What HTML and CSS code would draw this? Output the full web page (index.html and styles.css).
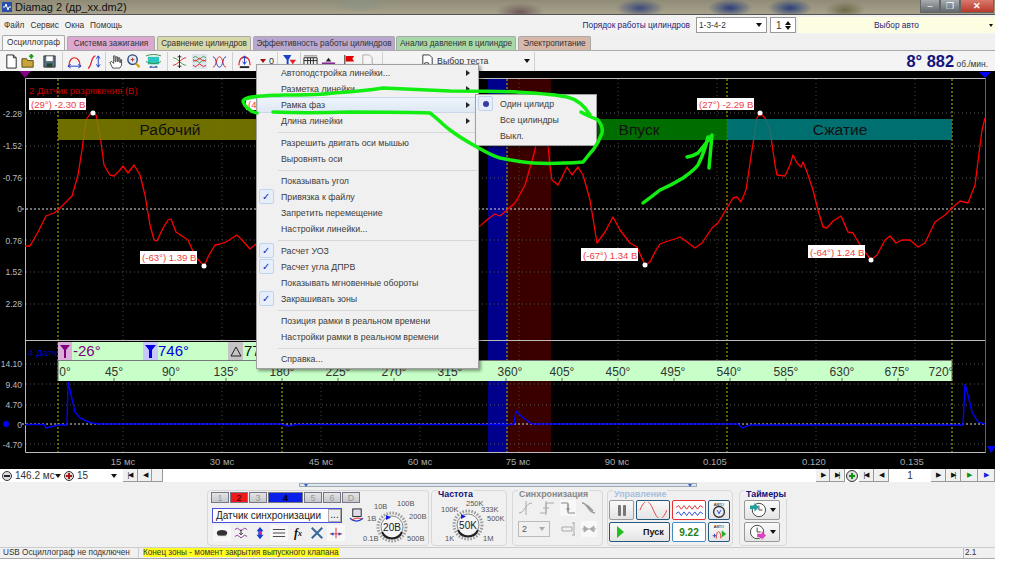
FILE: index.html
```html
<!DOCTYPE html>
<html lang="ru">
<head>
  <meta charset="UTF-8" />
  <title>Diamag 2</title>
  <link rel="stylesheet" href="styles.css">
</head>
<body>

<div class="window">

  <!-- Title bar -->
  <div class="titlebar">
    <svg class="app-icon" viewBox="0 0 10 10"><rect width="10" height="10" fill="#2a4fa8"/><path d="M1 5h2l1-3 2 6 1-3h2" fill="none" stroke="#fff"/></svg>
    <span class="title-text">Diamag 2 (др_хх.dm2)</span>
    <div class="win-buttons">
      <span class="win-btn">&#8211;</span>
      <span class="win-btn">&#10064;</span>
      <span class="win-btn close">&#10005;</span>
    </div>
  </div>

  <!-- Menu bar -->
  <div class="menubar">
    <span>Файл</span><span>Сервис</span><span>Окна</span><span>Помощь</span>
    <span class="order-label">Порядок работы цилиндров</span>
    <div class="select order-select">1-3-4-2<i class="drop"></i></div>
    <div class="select spin">1<b class="spin-arrows"><i class="up"></i><i class="drop"></i></b></div>
    <div class="car-select">Выбор авто<i class="drop"></i></div>
  </div>

  <!-- Tabs -->
  <div class="tabs">
    <div class="tab active">Осциллограф</div>
    <div class="tab pink">Система зажигания</div>
    <div class="tab olive">Сравнение цилиндров</div>
    <div class="tab violet">Эффективность работы цилиндров</div>
    <div class="tab green">Анализ давления в цилиндре</div>
    <div class="tab brown">Электропитание</div>
  </div>

  <!-- Toolbar -->
  <div class="toolbar">
    <svg class="ti" viewBox="0 0 16 16"><path d="M3 1h7l3 3v11H3z" fill="#fff" stroke="#222"/><path d="M10 1v3h3" fill="none" stroke="#222"/></svg>
    <svg class="ti ml2" viewBox="0 0 16 16"><path d="M1 5h5l1 2h6v7H1z" fill="#c9a53c" stroke="#5d4a12"/><path d="M11 1v4M9 3l2-2 2 2" stroke="#1c9c1c" stroke-width="2" fill="none"/></svg>
    <svg class="ti ml6" viewBox="0 0 16 16"><path d="M2 2h12v12H2z" fill="#5a7184" stroke="#333"/><rect x="4.500" y="2.500" width="7" height="5" fill="#fff"/><rect x="5" y="10" width="6" height="4" fill="#243"/></svg>
    <i class="tsep ml5"></i>
    <svg class="ti ml4" viewBox="0 0 16 16"><path d="M2 13C2 1 14 1 14 13" fill="none" stroke="#e02020" stroke-width="1.300"/><path d="M1 13h14M1 13l3-2M1 13l3 2M15 13l-3-2M15 13l-3 2" stroke="#1a3fd0" fill="none"/></svg>
    <svg class="ti ml5" viewBox="0 0 16 16"><path d="M1 15C5 15 4 2 9 2" fill="none" stroke="#e02020" stroke-width="1.300"/><path d="M12 2v12M12 2l-2 3M12 2l2 3M12 14l-2-3M12 14l2-3" stroke="#1a3fd0" fill="none"/></svg>
    <i class="tsep ml3"></i>
    <svg class="ti ml2" viewBox="0 0 16 16"><path d="M5 15L2 9l2-1 2 2V2h1.500v6h1V3h1.500v5h1V4h1.500v5h1V6h1v6l-2 3z" fill="#fff" stroke="#222" stroke-width=".8"/></svg>
    <svg class="ti ml3" viewBox="0 0 16 16"><circle cx="7" cy="6" r="5" fill="#dfeefa" stroke="#24406c" stroke-width="1.400"/><path d="M5 6h4M7 4v4" stroke="#b03030"/><path d="M10.500 10l4 4" stroke="#d9a520" stroke-width="2.400"/></svg>
    <svg class="ti ml5" viewBox="0 0 16 16"><rect x="2" y="3" width="12" height="8" fill="#28c8c0"/><path d="M0 2c5-2 11-2 16 0M0 8c5 3 11 3 16 0" fill="none" stroke="#3a8a40"/><path d="M4 14h8M4 14l2-1M12 14l-2-1" stroke="#123a9a" fill="none"/></svg>
    <i class="tsep ml6"></i>
    <svg class="ti ml4" viewBox="0 0 16 16"><path d="M1 4c5 0 9 8 14 8" fill="none" stroke="#3a9a40"/><path d="M1 12c5 0 9-8 14-8" fill="none" stroke="#e02020"/><path d="M8 1v14M6 3h4M6 13h4" stroke="#222"/></svg>
    <svg class="ti ml5 selected" viewBox="0 0 16 16"><path d="M1 4q3-3 5 0t4 0 5 0M1 8q3-3 5 0t4 0 5 0" fill="none" stroke="#3a9a40"/><path d="M1 6q3 3 5 0t4 0 5 0M1 12q3 3 5 0t4 0 5 0" fill="none" stroke="#e02020"/></svg>
    <svg class="ti ml5" viewBox="0 0 16 16"><path d="M1 3c4 0 3 11 7 11s3-11 7-11" fill="none" stroke="#1a3fd0"/><path d="M1 14c4 0 3-11 7-11s3 11 7 11" fill="none" stroke="#e02020"/></svg>
    <i class="tsep ml5"></i>
    <svg class="ti ml4" viewBox="0 0 16 16"><path d="M2 12C2 0 14 0 14 12" fill="none" stroke="#e02020" stroke-width="1.300"/><path d="M8 2v9M8 2L6 5M8 2l2 3M8 11L6 8M8 11l2-3" stroke="#1a3fd0" fill="none"/><path d="M3 14h10" stroke="#222" stroke-width="2"/></svg>
    <span class="t-count ml8"><i class="drop red"></i>0</span>
    <i class="tsep ml3"></i>
    <svg class="ti ml4" viewBox="0 0 16 16"><path d="M1 1h9L7 6v7H5V6z" fill="#1a3fd0"/><path d="M8 6h7l-3 4v4h-1v-4z" fill="#e02020"/></svg>
    <i class="tsep ml3"></i>
    <svg class="ti ml2" viewBox="0 0 16 16"><path d="M1 4h14v8H1zM1 7h14M5 4v8M8 4v8M11 4v8" fill="none" stroke="#222"/><path d="M1 2h14" stroke="#7a7a7a"/></svg>
    <svg class="ti ml3" viewBox="0 0 16 16"><path d="M1 10h14" stroke="#8a2a9a" stroke-width="2"/><path d="M1 14h14" stroke="#8a2a9a"/><path d="M8 4l-3 4h6z" fill="#222"/></svg>
    <svg class="ti ml6" viewBox="0 0 16 16"><path d="M3 1v14" stroke="#222"/><path d="M4 2h9l-2 3 2 3H4z" fill="#e00000"/></svg>
    <svg class="ti ml3" viewBox="0 0 16 16"><path d="M3 1h7l3 3v11H3z" fill="#f6f6f6" stroke="#aaa"/></svg>
    <i class="tsep ml7"></i>
    <div class="test-select">
      <svg class="ti" viewBox="0 0 16 16"><path d="M3 1h7l3 3v11H3z" fill="#fff" stroke="#333"/><circle cx="7" cy="12" r="3" fill="#ddd" stroke="#333"/></svg>
      <span>Выбор теста</span>
      <i class="drop"></i>
    </div>
    <i class="tsep"></i>
    <div class="rpm"><b>8° 882</b> <span>об./мин.</span></div>
  </div>

  <!-- Oscilloscope view -->
  <div class="scope">
    <svg class="scope-svg" viewBox="0 71 995 398" width="995" height="398">
      <!-- zones -->
      <rect class="zone-blue" x="488" y="79" width="19" height="373"/>
      <rect class="zone-red" x="507" y="79" width="44" height="373"/>

      <!-- grid -->
      <path class="grid-dim" d="M123 79V452M222 79V452M321 79V452M420 79V452M519 79V452M618 79V452M717 79V452M816 79V452M915 79V452"/>
      <path class="grid-h" d="M22 113H985M22 146H985M22 178H985M22 240H985M22 272H985M22 304H985M22 364H985M22 384H985M22 405H985M22 444H985"/>
      <path class="grid-zero" d="M22 209H985M22 424H985"/>
      <path class="grid-yellow" d="M58 79V452M282 79V452M507 79V452M727 79V452M952 79V452"/>

      <!-- axes -->
      <path class="axis" d="M25.500 78.500H985.500V452.500H25.500ZM25 340.500H985"/>
      <path class="axis-blue" d="M985.500 78V452"/>
      <path class="marker-purple" d="M19 71H31L25 78Z"/>
      <path class="marker-blue" d="M979 72H991L985 78Z"/>
      <path class="marker-blue" d="M987 446H996L991 453Z"/>
      <circle cx="6" cy="424" r="3" class="dot-blue"/>

      <!-- upper trace -->
      <path class="trace-red" d="M25 246L30 246 38 232 46 216 54 213 58 210 65 203 70 198 72 196 78 175 82 150 86 120 90 114 93 113 96 115 100 135 104 165 110 175 114 176 120 170 123 166 128 173 134 165 140 175 145 195 150 225 154 240 157 241 163 228 168 220 171 219 176 232 182 236 188 240 195 256 204 266 209 255 215 245 220 244 226 242 237 235 243 241 250 249 256 244 270 240 282 209 300 190 330 230 350 210 380 240 420 260 450 240 480 226 488 219 495 214 500 216 507 210 515 203 525 185 535 150 540 120 545 110 548 145 550 166 552 180 558 185 567 167 572 175 578 167 583 175 590 200 597 243 605 232 613 217 620 230 630 243 637 247 645 265 650 262 655 252 660 244 668 241 675 239 680 237 687 242 695 248 702 243 712 228 718 223 727 208 733 198 737 197 741 202 746 190 752 150 757 118 760 113 765 118 770 130 775 165 777 175 785 176 790 165 793 155 797 163 801 167 803 162 807 172 813 190 818 210 823 227 827 228 833 221 841 216 848 232 853 233 860 245 871 260 877 255 885 240 890 236 896 243 902 240 910 240 918 247 925 243 935 222 945 215 952 208 960 201 968 203 975 185 982 130 985 118"/>

      <!-- phase bands -->
      <rect class="band-olive" x="58" y="119" width="224" height="21"/>
      <rect class="band-green" x="551" y="119" width="176" height="21"/>
      <rect class="band-teal" x="727" y="119" width="225" height="21"/>
      <text class="band-text" x="170" y="135">Рабочий</text>
      <text class="band-text" x="639" y="135">Впуск</text>
      <text class="band-text" x="840" y="135">Сжатие</text>

      <!-- picked points -->
      <circle class="pick" cx="93" cy="113" r="2.500"/>
      <circle class="pick" cx="204" cy="266" r="2.500"/>
      <circle class="pick" cx="645" cy="265" r="2.500"/>
      <circle class="pick" cx="760" cy="113" r="2.500"/>
      <circle class="pick" cx="871" cy="260" r="2.500"/>

      <text class="legend-red" x="29" y="94">2 Датчик разряжения (В)</text>
      <rect class="tag" x="29" y="98" width="57" height="12"/><text class="tag-text" x="31" y="108">(29°) -2.30 В</text>
      <rect class="tag" x="246" y="97" width="14" height="13"/><text class="tag-text" x="248" y="108">(4</text>
      <rect class="tag" x="697" y="98" width="57" height="12"/><text class="tag-text" x="699" y="108">(27°) -2.29 В</text>
      <rect class="tag" x="140" y="251" width="57" height="13"/><text class="tag-text" x="142" y="261">(-63°) 1.39 В</text>
      <rect class="tag" x="581" y="248" width="57" height="13"/><text class="tag-text" x="583" y="259">(-67°) 1.34 В</text>
      <rect class="tag" x="808" y="245" width="57" height="13"/><text class="tag-text" x="810" y="256">(-64°) 1.24 В</text>

      <!-- y labels -->
      <g class="y-labels">
        <text x="22" y="117">-2.28</text><text x="22" y="149">-1.52</text><text x="22" y="181">-0.76</text>
        <text x="22" y="212">0</text><text x="22" y="244">0.76</text><text x="22" y="275">1.52</text><text x="22" y="307">2.28</text>
        <text x="22" y="367">14.10</text><text x="22" y="388">9.40</text><text x="22" y="408">4.70</text>
        <text x="22" y="428">0</text><text x="22" y="448">-4.70</text>
      </g>

      <!-- lower panel: marker row and degree ruler -->
      <text class="legend-blue" x="28" y="356">4 Датчик</text>
      <rect class="ruler" x="58" y="342" width="420" height="18"/>
      <rect class="ruler-line" x="58" y="360" width="894" height="1"/>
      <rect class="ruler" x="58" y="361" width="894" height="20"/>
      <rect x="58" y="342" width="14" height="18" fill="#d9aed9"/>
      <path d="M60 345H70L66 350V358H64V350Z" fill="#800080"/>
      <text class="m-text purple" x="73" y="356">-26°</text>
      <rect x="143" y="342" width="15" height="18" fill="#c8c8ff"/>
      <path d="M145 345H156L152 350V358H149V350Z" fill="#0000e0"/>
      <text class="m-text blue" x="158" y="356">746°</text>
      <rect x="228" y="342" width="15" height="18" fill="#c4c4c4"/>
      <path d="M236 347L231 356H241Z" fill="none" stroke="#222"/>
      <text class="m-text" x="244" y="356">77</text>
      <path class="ruler-ticks" d="M114 378V381M170 378V381M226 378V381M282 378V381M338 378V381M394 378V381M450 378V381M506 378V381M562 378V381M618 378V381M674 378V381M730 378V381M786 378V381M842 378V381M898 378V381M58 361V381M952 361V381"/>
      <g class="ruler-labels">
        <text x="65" y="376">0°</text><text x="114" y="376">45°</text><text x="171" y="376">90°</text><text x="226" y="376">135°</text>
        <text x="282" y="376">180°</text><text x="338" y="376">225°</text><text x="394" y="376">270°</text><text x="450" y="376">315°</text>
        <text x="510" y="376">360°</text><text x="562" y="376">405°</text><text x="618" y="376">450°</text><text x="673" y="376">495°</text>
        <text x="729" y="376">540°</text><text x="786" y="376">585°</text><text x="842" y="376">630°</text><text x="897" y="376">675°</text>
        <text x="941" y="376">720°</text>
      </g>

      <!-- lower trace -->
      <path class="trace-blue" d="M25 424.500H44L46 428 50 427 58 425H67L68 382 70 390 75 412 80 418 86 421 92 423 100 424H280L288 426 296 424.500H510L514 424 516 411 520 415 526 420 532 424H738L742 428 750 425H956L963 425 965 384 968 395 972 412 978 422 985 424"/>

      <!-- time labels -->
      <g class="x-labels">
        <text x="123" y="465">15 мс</text><text x="222" y="465">30 мс</text><text x="321" y="465">45 мс</text><text x="420" y="465">60 мс</text>
        <text x="518" y="465">75 мс</text><text x="617" y="465">90 мс</text><text x="715" y="465">0.105</text><text x="814" y="465">0.120</text><text x="912" y="465">0.135</text>
      </g>
    </svg>
  </div>

  <!-- Navigation row -->
  <div class="navbar">
    <span class="round minus"></span>
    <span class="nav-field first">146.2 мс<i class="drop"></i></span>
    <span class="round plus"></span>
    <span class="nav-field second">15<i class="drop"></i></span>
    <span class="nav-btn">|&#9664;</span><span class="nav-btn small">&#9664;</span><span class="nav-btn tiny"></span>
    <div class="nav-right">
      <span class="nav-btn small">&#9654;</span><span class="nav-btn">&#9654;|</span>
      <span class="round plus-green"></span>
      <span class="nav-btn">|&#9664;</span><span class="nav-btn">&#9664;</span>
      <span class="nav-num">1</span>
      <span class="nav-btn">&#9654;</span><span class="nav-btn">&#9654;|</span>
      <span class="nav-btn play-green">&#9654;</span><span class="nav-btn play-blue">&#9654;</span>
    </div>
  </div>

  <!-- Bottom controls -->
  <div class="controls">
    <div class="slider"></div>
    <div class="groups">

      <div class="group channel-group">
        <div class="channel-col">
          <div class="channels">
            <span class="ch">1</span><span class="ch on-red">2</span><span class="ch">3</span><span class="ch on-blue">4</span><span class="ch">5</span><span class="ch">6</span><span class="ch">D</span>
          </div>
          <div class="sensor-row">
            <div class="sensor-field">Датчик синхронизации<span class="dots">...</span></div>
            <svg class="ci" viewBox="0 0 16 16"><rect x="4" y="1" width="9" height="8" fill="#dde" stroke="#222"/><path d="M1 11q7 6 14 0" fill="none" stroke="#1a3fd0" stroke-width="1.400"/><path d="M3 13q5-4 11-1" fill="none" stroke="#e02020"/></svg>
          </div>
          <div class="icon-row">
            <span class="ibox"><svg viewBox="0 0 16 16"><ellipse cx="8" cy="8" rx="6" ry="3.500" fill="#333"/><path d="M3 11h10" stroke="#888"/></svg></span>
            <span class="ibox plain"><svg viewBox="0 0 16 16"><path d="M1 4q3-3 5 0t4 0 5 0" fill="none" stroke="#8a2a9a"/><path d="M1 12q3-3 5 0t4 0 5 0" fill="none" stroke="#8a2a9a"/><path d="M8 4v6M6 8l2 2 2-2" stroke="#222" fill="none"/></svg></span>
            <span class="ibox plain"><svg viewBox="0 0 16 16"><path d="M8 1l4 5h-2v4h2l-4 5-4-5h2V6H4z" fill="#1a3fd0"/><path d="M8 6v4" stroke="#e02090" stroke-width="2"/></svg></span>
            <span class="ibox"><svg viewBox="0 0 16 16"><path d="M1 4h14M1 8h14M1 12h14" stroke="#333"/></svg></span>
            <span class="ibox plain fx">f<small>x</small></span>
            <span class="ibox plain"><svg viewBox="0 0 16 16"><path d="M2 14L14 2M2 2l12 12" stroke="#3a6a9a" stroke-width="2.400"/></svg></span>
            <span class="ibox"><svg viewBox="0 0 16 16"><path d="M8 2v12M1 9h14" stroke="#e02020"/><path d="M2 9l3-2v4zM14 9l-3-2v4z" fill="#1a3fd0"/></svg></span>
          </div>
        </div>
        <svg class="knob-box" viewBox="0 0 66 53">
          <g class="knob-label">
            <text x="2" y="50">0.1В</text><text x="6" y="30">1В</text><text x="13" y="18">10В</text><text x="36" y="15">100В</text><text x="48" y="28">200В</text><text x="46" y="50">500В</text>
          </g>
          <circle class="knob-scale" cx="31" cy="36" r="14"/>
          <circle class="knob-face" cx="31" cy="36" r="11"/>
          <path class="knob-arc" d="M21 41A11 11 0 0 0 41 41"/>
          <path d="M25 24l5 2.500-5 2.500z" fill="#1020e0"/>
          <text class="knob-value" x="31" y="40">20В</text>
        </svg>
      </div>

      <div class="group freq-group">
        <div class="group-title navy">Частота</div>
        <svg class="knob-box" viewBox="0 0 74 50">
          <g class="knob-label">
            <text x="9" y="17">100K</text><text x="34" y="11">250K</text><text x="49" y="17">333K</text><text x="55" y="26">500K</text><text x="13" y="46">1K</text><text x="51" y="46">1M</text>
          </g>
          <circle class="knob-scale" cx="36" cy="30" r="14"/>
          <circle class="knob-face" cx="36" cy="30" r="11"/>
          <path class="knob-arc" d="M26 35A11 11 0 0 0 46 35"/>
          <path d="M29 19l5 2.500-5 2.500z" fill="#1020e0"/>
          <text class="knob-value" x="36" y="34">50K</text>
        </svg>
      </div>

      <div class="group sync-group">
        <div class="group-title gray">Синхронизация</div>
        <div class="sync-grid">
          <svg viewBox="0 0 16 16"><path d="M1 13C7 13 7 3 14 3M8 1v14" fill="none" stroke="#aaa"/></svg>
          <svg viewBox="0 0 16 16"><path d="M1 13h6V3h8M7 1v14M4 8h6" fill="none" stroke="#aaa"/></svg>
          <svg class="light" viewBox="0 0 16 16"><path d="M1 3h7v10h7M8 4v8M6 9h4" fill="none" stroke="#888"/></svg>
          <svg viewBox="0 0 16 16"><path d="M1 3C7 3 7 13 14 13M6 5l6 6" fill="none" stroke="#999" stroke-width="1.500"/></svg>
          <div class="select sync-select">2<i class="drop gray"></i></div>
          <svg viewBox="0 0 16 16"><path d="M2 6h10v4H2zM12 2h3M12 14h3M14 2v12" fill="none" stroke="#aaa"/></svg>
          <svg class="light" viewBox="0 0 16 16"><path d="M1 8h14M7 8L3 5v6zM9 8l4-3v6z" stroke="#aaa" fill="#aaa"/></svg>
        </div>
      </div>

      <div class="group control-group">
        <div class="group-title pale">Управление</div>
        <div class="control-grid">
          <button class="btn pause"><i></i><i></i></button>
          <button class="btn blue-edge"><svg viewBox="0 0 30 16"><path d="M1 8C6-4 10-4 15 8s9 12 14 0" fill="none" stroke="#e04040"/></svg></button>
          <button class="btn red-edge"><svg viewBox="0 0 32 16"><path d="M1 5l3-2 3 4 3-4 3 4 3-4 3 4 3-4 3 4 3-4 3 2" fill="none" stroke="#e02020"/><path d="M1 12l3-2 3 4 3-4 3 4 3-4 3 4 3-4 3 4 3-4 3 2" fill="none" stroke="#1a3fd0"/></svg></button>
          <button class="btn blue-edge"><svg viewBox="0 0 18 18"><circle cx="9" cy="11" r="6" fill="#e8e8f0" stroke="#333" stroke-width="1.500"/><path d="M7 9l2 4 2-4" fill="none" stroke="#1a3fd0"/><text class="auto" x="9" y="4">АВТО</text></svg></button>
          <button class="btn blue-edge start"><i class="play"></i><b>Пуск</b></button>
          <button class="btn soft-edge volt-value">9.22</button>
          <button class="btn blue-edge"><svg viewBox="0 0 18 18"><path d="M2 13h4M4 11v4" stroke="#1a3fd0"/><path d="M6 16C6 6 11 6 11 16" fill="none" stroke="#e02020"/><path d="M12 7l5 4-5 4z" fill="#20b020"/><text class="auto" x="9" y="4">АВТО</text></svg></button>
        </div>
      </div>

      <div class="group timer-group">
        <div class="group-title navy">Таймеры</div>
        <button class="btn timer"><svg viewBox="0 0 20 18"><circle cx="11" cy="9" r="7.500" fill="#fff" stroke="#333"/><path d="M11 4v5h4" stroke="#333" fill="none"/><path d="M1 4h5V1l5 5-5 5V8H1z" fill="#20a0a0"/></svg><i class="drop"></i></button>
        <button class="btn timer"><svg viewBox="0 0 20 18"><circle cx="9" cy="9" r="7.500" fill="#fff" stroke="#333"/><path d="M9 4v5h4" stroke="#333" fill="none"/><path d="M9 11h5V8l5 5-5 5v-3H9z" fill="#e040c0"/></svg><i class="drop"></i></button>
      </div>

    </div>
  </div>

  <!-- Status bar -->
  <div class="statusbar">
    <span class="status-cell usb">USB Осциллограф не подключен</span>
    <span class="status-cell hint"><mark>Конец зоны - момент закрытия выпускного клапана</mark></span>
    <span class="status-cell version">2.1</span>
  </div>

  <!-- Context menu -->
  <div class="menu main-menu">
    <div class="item sub"><span>Автоподстройка линейки...</span></div>
    <div class="item sub"><span>Разметка линейки</span></div>
    <div class="item sub hot"><span>Рамка фаз</span></div>
    <div class="item sub"><span>Длина линейки</span></div>
    <div class="sep"></div>
    <div class="item"><span>Разрешить двигать оси мышью</span></div>
    <div class="item"><span>Выровнять оси</span></div>
    <div class="sep"></div>
    <div class="item"><span>Показывать угол</span></div>
    <div class="item checked"><span>Привязка к файлу</span></div>
    <div class="item"><span>Запретить перемещение</span></div>
    <div class="item"><span>Настройки линейки...</span></div>
    <div class="sep"></div>
    <div class="item checked"><span>Расчет УОЗ</span></div>
    <div class="item checked"><span>Расчет угла ДПРВ</span></div>
    <div class="item"><span>Показывать мгновенные обороты</span></div>
    <div class="item checked"><span>Закрашивать зоны</span></div>
    <div class="sep"></div>
    <div class="item"><span>Позиция рамки в реальном времени</span></div>
    <div class="item"><span>Настройки рамки в реальном времени</span></div>
    <div class="sep"></div>
    <div class="item"><span>Справка...</span></div>
  </div>

  <div class="menu sub-menu">
    <div class="item radio"><span>Один цилидр</span></div>
    <div class="item"><span>Все цилиндры</span></div>
    <div class="item"><span>Выкл.</span></div>
  </div>

  <!-- Hand-drawn marks over the screenshot -->
  <svg class="scribble" viewBox="0 0 995 559" width="995" height="559">
    <path d="M257 113C250 112 244 106 243 101 245 96 262 96 283 95 300 95 320 95 333 93 350 92 365 91 383 88 410 89 430 90 450 91 480 91 500 91 517 92 535 93 555 94 567 97 576 99 584 105 590 115 590 117 585 114 581 112 587 116 595 118 598 120 602 125 603 128 602 133 599 142 596 146 593 150 588 155 586 159 583 162 570 163 550 164 533 163 520 162 510 160 500 158 490 155 484 151 477 147 466 141 458 136 450 130 442 124 437 118 430 113 410 112 380 112 350 112 320 113 295 113 273 112"/>
    <path d="M643 203C648 199 654 195 660 190 667 187 675 183 683 178 690 173 695 169 698 165 703 155 706 146 708 137M687 157C692 156 695 155 698 153 703 147 708 141 712 135 711 146 710 157 709 168"/>
  </svg>
</div>

</body>
</html>
```

FILE: styles.css
```css
html, body {
  margin: 0;
  padding: 0;
  background: #fff;
  overflow: hidden;
}

body {
  font-family: 'Liberation Sans', sans-serif;
  font-size: 8.800px;
  color: #333;
}

.window {
  position: relative;
  width: 995px;
  height: 559px;
  display: flex;
  flex-direction: column;
  background: #f0f0f0;
  overflow: hidden;
  white-space: nowrap;
}

.window > * {
  min-height: 0;
  overflow: hidden;
}

.window > .menu,
.window > .scribble {
  overflow: visible;
}

.ml2 { margin-left: 2px; }
.ml3 { margin-left: 3px; }
.ml4 { margin-left: 4px; }
.ml5 { margin-left: 5px; }
.ml6 { margin-left: 6px; }
.ml7 { margin-left: 7px; }
.ml8 { margin-left: 8px; }

.drop {
  display: inline-block;
  width: 0;
  height: 0;
  border-left: 3px solid transparent;
  border-right: 3px solid transparent;
  border-top: 4px solid #111;
}

.drop.red { border-top-color: #a01010; }
.drop.gray { border-top-color: #aaa; }

/* title bar */
.titlebar {
  flex: 0 0 15px;
  display: flex;
  align-items: center;
  background:
    radial-gradient(ellipse 22px 9px at 730px 8px, #2b3f78, transparent),
    radial-gradient(ellipse 22px 9px at 790px 8px, #2b3f78, transparent),
    radial-gradient(ellipse 20px 9px at 845px 10px, #6f6a48, transparent),
    radial-gradient(ellipse 24px 9px at 520px 12px, #6f5a5a, transparent),
    radial-gradient(ellipse 24px 9px at 640px 8px, #3b4b78, transparent),
    radial-gradient(ellipse 30px 9px at 360px 4px, #8c9484, transparent),
    linear-gradient(#8f8b76, #a8a28c);
  border-bottom: 1px solid #555;
  box-sizing: border-box;
}

.app-icon {
  width: 10px;
  height: 10px;
  margin-left: 2px;
}

.title-text {
  margin-left: 3px;
  font-size: 11px;
  color: #111;
}

.win-buttons {
  display: flex;
  margin-left: auto;
  margin-right: 1px;
  height: 13px;
  align-self: flex-start;
}

.win-btn {
  width: 20px;
  text-align: center;
  font-size: 9px;
  line-height: 12px;
  color: #fff;
  background: linear-gradient(#a8aeb0, #62686c);
  border: 1px solid #666;
  border-top: 0;
  box-sizing: border-box;
}

.win-btn.close {
  width: 34px;
  background: linear-gradient(#d97a6c, #b8382a);
  font-weight: bold;
}

/* menu bar */
.menubar {
  flex: 0 0 20px;
  display: flex;
  align-items: center;
  padding-left: 4px;
  gap: 6px;
  background: #f2f2f2;
  font-size: 8.300px;
}

.order-label {
  margin-left: auto;
  margin-right: 0;
  color: #1c1c7c;
}

.select {
  display: flex;
  align-items: center;
  justify-content: space-between;
  background: #fff;
  border: 1px solid #999;
  box-sizing: border-box;
  padding: 0 4px 0 2px;
  height: 16px;
}

.order-select { width: 71px; }

.spin {
  width: 26px;
  padding-left: 5px;
  margin-left: -3px;
  margin-right: -4px;
  font-size: 10px;
}

.spin-arrows {
  display: flex;
  flex-direction: column;
  gap: 1px;
}

.spin-arrows .up {
  width: 0;
  height: 0;
  border-left: 3px solid transparent;
  border-right: 3px solid transparent;
  border-bottom: 4px solid #111;
}

.car-select {
  width: 197px;
  height: 16px;
  line-height: 16px;
  text-align: center;
  color: #1c1c7c;
  background: #fdfde2;
  position: relative;
}

.car-select .drop {
  position: absolute;
  right: 2px;
  top: 7px;
  border-left-width: 2px;
  border-right-width: 2px;
  border-top-width: 3px;
}

/* tabs */
.tabs {
  flex: 0 0 15px;
  display: flex;
  align-items: flex-end;
  padding-left: 2px;
  gap: 2px;
  font-size: 8.200px;
}

.tab {
  height: 14px;
  line-height: 13px;
  padding: 0;
  text-align: center;
  box-sizing: border-box;
  border-radius: 2px 2px 0 0;
  border: 1px solid #aaa;
  border-bottom: 0;
}

.tab.active { width: 63px; height: 15px; background: #f8f8f8; }
.tab.pink { width: 88px; background: #dca8d0; }
.tab.olive { width: 94px; background: #d8d8a8; }
.tab.violet { width: 142px; background: #b8a8d0; }
.tab.green { width: 120px; background: #a8d8a8; margin-left: -1px; }
.tab.brown { width: 73px; background: #d8b8a8; }

/* toolbar */
.toolbar {
  flex: 0 0 21px;
  display: flex;
  align-items: center;
  padding-left: 4px;
  background: #f4f4f4;
  border-top: 1px solid #aaa;
  box-sizing: border-box;
}

.ti {
  width: 15px;
  height: 15px;
  flex: none;
}

.ti.selected { background: #dfe6ee; }

.tsep {
  width: 1px;
  height: 19px;
  background: #cfcfcf;
  flex: none;
}

.t-count {
  display: flex;
  align-items: center;
  gap: 3px;
  flex: none;
  font-size: 9px;
}

.test-select {
  width: 151px;
  display: flex;
  align-items: center;
  gap: 2px;
  padding: 0 4px 0 37px;
  box-sizing: border-box;
  flex: none;
}

.test-select .drop { margin-left: auto; }

.rpm {
  margin-left: auto;
  padding-right: 7px;
  color: #12127c;
}

.rpm b {
  font-size: 16.400px;
}

.rpm span {
  font-size: 8.400px;
  color: #333;
}

/* scope */
.scope {
  flex: 0 0 398px;
  background: #000;
}

.scope-svg {
  display: block;
}

.zone-blue { fill: #00008c; }
.zone-red { fill: #3a0000; }

.grid-dim, .grid-h, .grid-zero, .grid-yellow {
  fill: none;
  stroke-dasharray: 1 3;
}

.grid-dim { stroke: #3c5010; }
.grid-h { stroke: #555; }
.grid-zero { stroke: #ddd; stroke-dasharray: 2 2; }
.grid-yellow { stroke: #a0a000; stroke-dasharray: 2 2; stroke-width: 1.200; }

.axis { fill: none; stroke: #bbb; }
.axis-blue { stroke: #5050ff; }
.marker-purple { fill: #800080; }
.marker-blue { fill: #0000ff; }
.dot-blue { fill: #0000ff; }

.trace-red { fill: none; stroke: #ff0000; stroke-width: 1.300; stroke-linejoin: round; }
.trace-blue { fill: none; stroke: #0000ff; stroke-width: 1.400; }

.band-olive { fill: #808000; fill-opacity: .87; }
.band-green { fill: #008000; fill-opacity: .85; }
.band-teal { fill: #008080; fill-opacity: .87; }

.band-text {
  font-size: 15.500px;
  fill: #111;
  text-anchor: middle;
}

.pick { fill: #fff; }

.legend-red { font-size: 9.500px; fill: #c80000; }
.legend-blue { font-size: 9.500px; fill: #0000c8; }

.tag { fill: #fff; }
.tag-text { font-size: 9.600px; fill: #f04040; }

.y-labels text {
  font-size: 8.500px;
  fill: #bbb;
  text-anchor: end;
}

.x-labels text {
  font-size: 9.500px;
  fill: #aaa;
  text-anchor: middle;
}

.ruler { fill: #c8ffc8; }
.ruler-line { fill: #777; }
.ruler-ticks { stroke: #666; fill: none; }

.ruler-labels text {
  font-size: 12px;
  fill: #333;
  text-anchor: middle;
}

.m-text { font-size: 15px; fill: #111; }
.m-text.purple { fill: #800080; }
.m-text.blue { fill: #0000e0; }

/* navigation row */
.navbar {
  flex: 0 0 13px;
  display: flex;
  align-items: center;
  background: #fff;
  padding-left: 2px;
  font-size: 10px;
}

.round {
  flex: none;
  width: 10px;
  height: 10px;
  border-radius: 50%;
  border: 1px solid #333;
  box-sizing: border-box;
  background: #ddd;
  position: relative;
}

.round::after {
  content: "";
  position: absolute;
  left: 1px;
  top: 3px;
  width: 6px;
  height: 2px;
  background: #223;
}

.round.plus::before, .round.plus-green::before {
  content: "";
  position: absolute;
  left: 3px;
  top: 1px;
  width: 2px;
  height: 6px;
  background: #b01010;
}

.round.plus::after { background: #b01010; }
.round.plus-green::before, .round.plus-green::after { background: #109010; }
.round.plus-green { margin: 0 1px; width: 12px; height: 12px; }
.round.plus-green::after { left: 2px; top: 4px; }
.round.plus-green::before { left: 4px; top: 2px; }

.nav-field {
  display: flex;
  align-items: center;
  justify-content: space-between;
  box-sizing: border-box;
  padding: 0 6px 0 3px;
  flex: none;
}

.nav-field.first { width: 52px; }
.nav-field.second { width: 49px; }

.nav-btn {
  flex: none;
  width: 15px;
  height: 13px;
  line-height: 12px;
  font-size: 7px;
  text-align: center;
  color: #111;
  background: #f0f0f0;
  border-right: 1px solid #999;
  border-bottom: 1px solid #999;
  box-sizing: border-box;
  letter-spacing: -1px;
}

.nav-btn.small { width: 14px; }
.nav-btn.tiny { width: 11px; }

.nav-right {
  display: flex;
  align-items: center;
  margin-left: auto;
}

.nav-num {
  width: 42px;
  text-align: center;
  font-size: 10px;
}

.play-green { color: #109010; width: 17px; }
.play-blue { color: #1020e0; width: 17px; }

/* bottom controls */
.controls {
  flex: 0 0 65px;
  box-sizing: border-box;
  padding-top: 1px;
  background: #f0f0f0;
}

.slider {
  position: relative;
  width: 398px;
  height: 4px;
  margin-left: 299px;
  background: #dfe8f2;
  border: 1px solid #a0a8b0;
  box-sizing: border-box;
}

.slider::before, .slider::after {
  content: "";
  position: absolute;
  top: 0;
  border-left: 2px solid transparent;
  border-right: 2px solid transparent;
  border-top: 3px solid #2a60d0;
}

.slider::before { left: 4px; }
.slider::after { right: 4px; }

.groups {
  display: flex;
  gap: 4px;
  margin-left: 207px;
  margin-top: 3px;
  height: 56px;
}

.group {
  box-sizing: border-box;
  border: 1px solid #d8d8d8;
  border-radius: 4px;
  position: relative;
  display: flex;
}

.group-title {
  position: absolute;
  top: -1px;
  left: 5px;
  padding: 0 1px;
  background: #f0f0f0;
  font-weight: bold;
  font-size: 8.900px;
  line-height: 9px;
}

.group-title.navy { color: #12127c; }
.group-title.gray { color: #888; }
.group-title.pale { color: #a8c0dc; }

.channel-group {
  width: 222px;
  padding: 0 0 0 3px;
}

.channel-col {
  width: 150px;
  flex: none;
}

.channels {
  display: flex;
  gap: 1px;
  height: 11px;
  margin-top: 1px;
}

.ch {
  width: 18px;
  text-align: center;
  font-size: 9px;
  line-height: 10px;
  color: #999;
  background: linear-gradient(#e4e4e4, #c4c8cc);
  border: 1px solid #778;
  box-sizing: border-box;
}

.ch.on-red {
  color: #300;
  background: #f01818;
}

.ch.on-blue {
  width: 35px;
  color: #001;
  font-weight: bold;
  background: #0820e8;
}

.sensor-row {
  display: flex;
  align-items: center;
  margin-top: 5px;
  gap: 7px;
}

.sensor-field {
  width: 130px;
  height: 15px;
  line-height: 13px;
  padding-left: 3px;
  margin-left: 1px;
  box-sizing: border-box;
  flex: none;
  position: relative;
  background: #fff;
  border: 1px solid #4a50e0;
  font-size: 10px;
  color: #222;
}

.dots {
  position: absolute;
  top: 0;
  right: 0;
  width: 13px;
  height: 13px;
  line-height: 9px;
  text-align: center;
  background: #eee;
  border: 1px solid #aaa;
  box-sizing: border-box;
}

.ci {
  width: 15px;
  height: 15px;
  flex: none;
}

.icon-row {
  display: flex;
  gap: 1px;
  margin: 2px 0 0 2px;
}

.ibox {
  width: 18px;
  height: 16px;
  display: flex;
  align-items: center;
  justify-content: center;
  background: #f8f8f8;
}

.ibox.plain { background: transparent; }
.ibox svg { width: 14px; height: 14px; }

.fx {
  font-family: 'Liberation Serif', serif;
  font-style: italic;
  font-weight: bold;
  font-size: 12px;
  color: #111;
}

.fx small { font-size: 8px; }

.knob-box {
  width: 66px;
  height: 53px;
  flex: none;
}

.knob-label text {
  font-size: 7.500px;
  fill: #555;
}

.knob-scale {
  fill: none;
  stroke: #999;
  stroke-width: 3;
  stroke-dasharray: 1.500 1.500;
}

.knob-face {
  fill: #f4f4f4;
  stroke: #888;
}

.knob-arc {
  fill: none;
  stroke: #222;
  stroke-width: 2;
}

.knob-value {
  font-size: 10px;
  fill: #222;
  text-anchor: middle;
}

.freq-group {
  width: 76px;
  margin-left: -2px;
  align-items: flex-end;
}

.freq-group .knob-box {
  width: 74px;
  height: 50px;
}

.sync-group {
  width: 91px;
  margin-left: 1px;
}

.sync-grid {
  display: grid;
  grid-template-columns: repeat(4, 18px);
  grid-auto-rows: 18px;
  gap: 3px 3px;
  padding: 9px 0 0 5px;
}

.sync-grid svg { width: 16px; height: 16px; }
.sync-grid .light { background: #f8f8f8; }

.sync-select {
  grid-column: span 2;
  width: 32px;
  height: 16px;
  color: #555;
  background: #f0f0f0;
  border-color: #bbb;
  justify-self: start;
  padding-left: 3px;
}

.control-group {
  width: 126px;
}

.control-grid {
  display: grid;
  grid-template-columns: 25px 34px 34px 22px;
  grid-template-rows: 20px 20px;
  gap: 2px;
  padding: 9px 0 0 1px;
}

.btn {
  margin: 0;
  padding: 0;
  display: flex;
  align-items: center;
  justify-content: center;
  border-radius: 2px;
  border: 1px solid #999;
  background: linear-gradient(#fafafa, #e4e4e4);
  box-sizing: border-box;
}

.btn svg { width: 90%; height: 90%; }
.blue-edge { border-color: #24587c; }
.red-edge { border-color: #e83030; background: #fff; }
.soft-edge { border-color: #4a8cc0; background: #fff; }

.pause i {
  width: 3px;
  height: 11px;
  margin: 0 1px;
  background: #777;
  border-radius: 1px;
}

.start {
  grid-column: span 2;
  justify-content: flex-start;
  padding-left: 7px;
}

.start .play {
  border-left: 7px solid #20c020;
  border-top: 6px solid transparent;
  border-bottom: 6px solid transparent;
}

.start b {
  margin-left: 19px;
  font-size: 9px;
  color: #111;
}

.volt-value {
  font-weight: bold;
  font-size: 10px;
  color: #208020;
}

.auto {
  font-size: 4.500px;
  fill: #111;
  text-anchor: middle;
}

.timer-group {
  width: 48px;
  margin-left: 2px;
  flex-direction: column;
  gap: 2px;
  padding: 9px 0 0 4px;
}

.timer {
  width: 36px;
  height: 20px;
  gap: 3px;
  flex: none;
}

.timer svg { width: 18px; height: 16px; }

/* status bar */
.statusbar {
  flex: 0 0 12px;
  display: flex;
  font-size: 8.200px;
  line-height: 10px;
  border-top: 1px solid #ccc;
  border-bottom: 1px solid #aaa;
  box-sizing: border-box;
  background: #f0f0f0;
}

.status-cell {
  box-sizing: border-box;
}

.usb { width: 139px; padding-left: 3px; border-right: 1px solid #ccc; }
.hint { width: 824px; padding-left: 4px; }
.hint mark { background: #ffff20; color: #333; }
.version { border-left: 1px solid #bbb; padding-left: 1px; }

/* context menus */
.menu {
  position: absolute;
  box-sizing: border-box;
  background: #f0f0f0;
  border: 1px solid #a0a0a0;
  box-shadow: 2px 2px 3px rgba(0, 0, 0, 0.4);
  color: #3c3c3c;
}

.main-menu {
  left: 256px;
  top: 64px;
  width: 223px;
  height: 305px;
}

.sub-menu {
  left: 475px;
  top: 94px;
  width: 122px;
  height: 52px;
  padding-top: 1px;
}

.item {
  height: 16px;
  line-height: 16px;
  padding-left: 24px;
  position: relative;
}

.hot {
  background: linear-gradient(#eff4fa, #dde8f4);
  box-shadow: inset 0 0 0 1px #c8d8ea;
  border-radius: 2px;
}

.sub::after {
  content: "";
  position: absolute;
  right: 8px;
  top: 5px;
  border-left: 4px solid #222;
  border-top: 3px solid transparent;
  border-bottom: 3px solid transparent;
}

.checked::before, .radio::before {
  content: "";
  position: absolute;
  left: 2px;
  top: 0;
  width: 15px;
  height: 15px;
  box-sizing: border-box;
  background: #e6eefa;
  border: 1px solid #c0d4ee;
  border-radius: 2px;
}

.checked::after {
  content: "\2713";
  position: absolute;
  left: 5px;
  top: 0;
  font-family: 'DejaVu Sans', sans-serif;
  font-size: 10px;
  line-height: 15px;
  color: #1a2ab0;
}

.radio::after {
  content: "";
  position: absolute;
  left: 7px;
  top: 5px;
  width: 6px;
  height: 6px;
  border-radius: 50%;
  background: #3a3aa0;
}

.sep {
  height: 6px;
  position: relative;
}

.sep::after {
  content: "";
  position: absolute;
  left: 21px;
  right: 1px;
  top: 3px;
  border-top: 1px solid #d8d8d8;
}

.scribble {
  position: absolute;
  left: 0;
  top: 0;
  pointer-events: none;
}

.scribble path {
  fill: none;
  stroke: #12ee12;
  stroke-width: 3.500;
  stroke-linecap: round;
  stroke-linejoin: round;
}
```
